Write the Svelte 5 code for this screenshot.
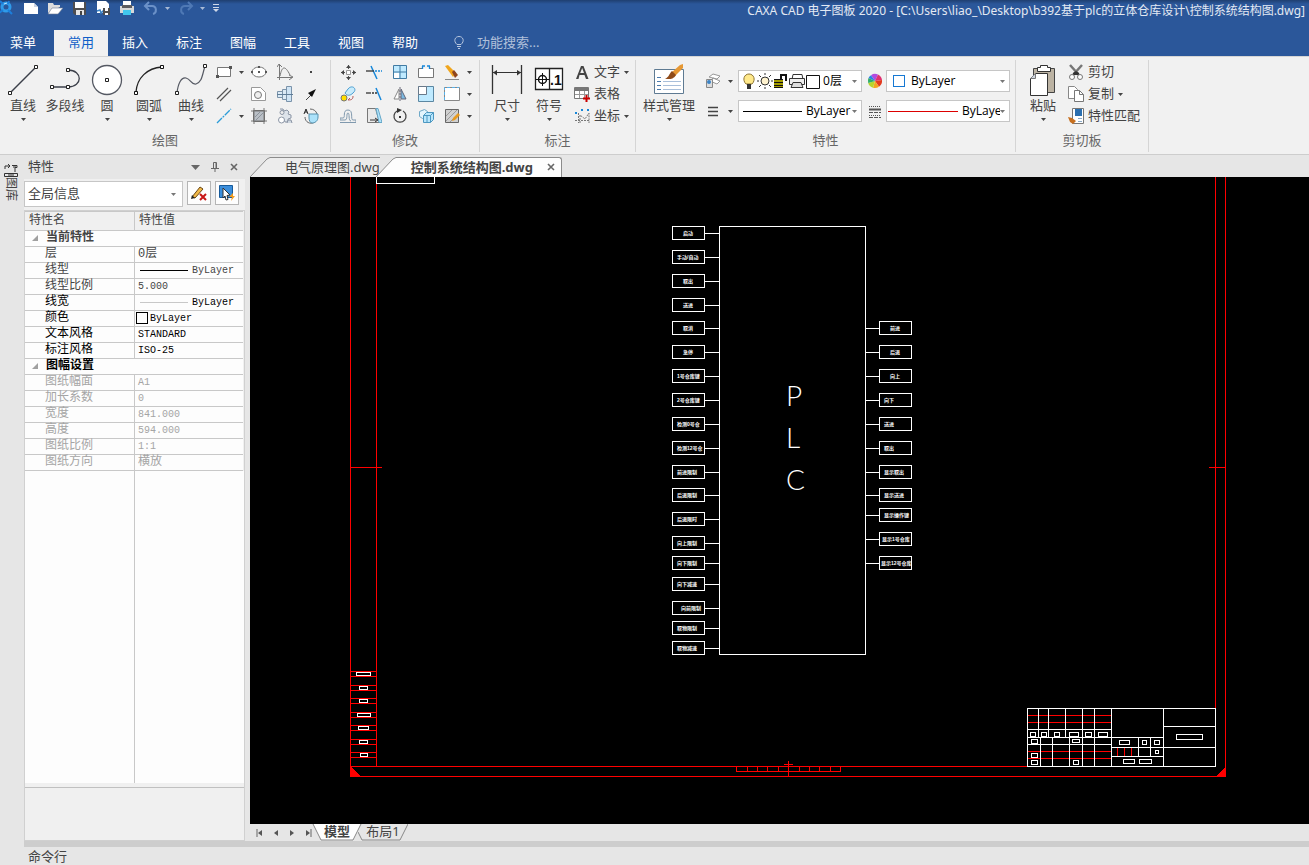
<script>
  let activeTab = $state('常用');
  let query = $state('');
  let scope = $state('全局信息');

  const tabs = ['菜单', '常用', '插入', '标注', '图幅', '工具', '视图', '帮助'];

  // Icon bodies; small ones use a 16px box, large ones 32px.
  const icons = {
    app: '<circle cx="6" cy="7" r="4" fill="none" stroke="#2f9bea" stroke-width="3"/><path d="M0 1l3 3M8 10l4 4M9 1l-1 3M-1 13l4-3" stroke="#1c7fdc" stroke-width="2"/><path d="M4 4l3-1" stroke="#b5e2ff"/>',
    new: '<path d="M1 3h10l4 4v7H1z" fill="#fff"/><path d="M11 3v4h4" fill="#ccd5e4"/>',
    open: '<path d="M1 13V3h5l1 2h6v2" fill="#ddd"/><path d="M1 14l4-6h11l-5 6z" fill="#fff" stroke="#6e7b92" stroke-width=".6"/>',
    save: '<path d="M2 2h13v13H4l-2-2z" fill="#4d4d50"/><path d="M4 2h9v6H4z" fill="#fff"/><path d="M5 10h8v5H5z" fill="#e4e4e4"/><path d="M9 11h2v4H9z" fill="#444"/>',
    saveas: '<path d="M2 1h9l3 3v9H2z" fill="#fff"/><path d="M2 11l3-1 1 3 3-3" stroke="#3b83c6" stroke-width="1.500" fill="none"/><path d="M8 8h7v7H8z" fill="#4d4d50"/><path d="M10 8h3v3h-3zM10 13h3v2h-3z" fill="#fff"/>',
    print: '<path d="M4 1h8v4H4z" fill="#fff"/><path d="M1 6h14v7H1z" fill="#d8d8d8"/><path d="M3 5h10v3H3z" fill="#5c5c60"/><path d="M4 10h8v5H4z" fill="#41c7ee"/>',
    undo: '<path d="M6 2L2 6l4 4M2 6h7c5 0 5 7 1 8" fill="none" stroke="#6b91c8" stroke-width="2"/>',
    redo: '<path d="M10 2l4 4-4 4M14 6H7c-5 0-5 7-1 8" fill="none" stroke="#4f79b5" stroke-width="2"/>',
    line: '<path d="M3 29L29 3" stroke="#3b3f49" stroke-width="1.500"/><path d="M1.500 27.500h3v3h-3zM27.500 1.500h3v3h-3z" fill="#fff" stroke="#222"/>',
    polyline: '<path d="M3 23h16c15 0 15-17 0-17" fill="none" stroke="#3b3f49" stroke-width="1.300"/><path d="M1.500 21.500h3v3h-3zM17.500 21.500h3v3h-3zM17.500 4.500h3v3h-3z" fill="#fff" stroke="#222"/>',
    circle: '<circle cx="16" cy="16" r="14.500" fill="#fff" stroke="#555963" stroke-width="1.300"/><path d="M14.500 14.500h3v3h-3z" fill="#fff" stroke="#222"/>',
    arc: '<path d="M3 28C4 14 14 4 29 3" fill="none" stroke="#222" stroke-width="1.300"/><path d="M1.500 27.500h3v3h-3zM27.500 1.500h3v3h-3z" fill="#fff" stroke="#111"/>',
    spline: '<path d="M2 29C3 20 6 13 11 14c5 1 5 7 10 6 6-2 6-8 9-18" fill="none" stroke="#555963" stroke-width="1.200"/><path d="M.5 27.500h3v3h-3zM28.500 .5h3v3h-3z" fill="#fff" stroke="#222"/>',
    rect: '<path d="M1.500 3.500h13v9h-13z" fill="#fff" stroke="#777"/><path d="M13 2h3v3h-3zM0 11h3v3H0z" fill="#555"/>',
    parallel: '<path d="M1 13L12 2M4 15L15 4" stroke="#555" stroke-width="1.200"/>',
    xline: '<path d="M1 15L15 1" stroke="#2b9cd8" stroke-width="1.300" stroke-dasharray="7 1 2 1"/>',
    ellipse: '<ellipse cx="8" cy="8" rx="7" ry="5" fill="#fff" stroke="#777"/><path d="M0 7h2v2H0zM14 7h2v2h-2zM7 2h2v2H7zM7 7h2v2H7z" fill="#555"/>',
    contour: '<path d="M.5 1.500h9l5 5v8H.5z" fill="#fff" stroke="#999"/><circle cx="7" cy="9" r="3.500" fill="#eee" stroke="#777"/>',
    hatch: '<path d="M2.500 2.500h11v11h-11z" fill="#b9bfc6" stroke="#666"/><path d="M0 3h16M3 0v16M0 13h16M13 0v16" stroke="#777"/><path d="M4 9l5-5M4 13l9-9" stroke="#8c939b"/>',
    curve: '<path d="M2.500 1v15M0 13.500h15M3 12C5 2 8 1 13 11" fill="none" stroke="#777"/><path d="M0 3l2-3 3 3M12 11l4 2-4 3" fill="none" stroke="#777"/>',
    shaft: '<path d="M.5 5.500h5v6h-5zM5.500 3.500h4v10h-4z" fill="#dbeaf6" stroke="#7a93aa"/><path d="M9.500 .5h5v15h-5z" fill="#cfe4f5" stroke="#7a93aa"/><path d="M0 8.500h16" stroke="#5f7d98"/>',
    gear: '<path d="M3 1h3l1 2 3-1 2 2-1 2 3 1v3l-3 1v3H8l-1-2" fill="#dde3ea" stroke="#8b95a5"/><circle cx="5" cy="4.500" r="2" fill="#eee" stroke="#8b95a5"/><circle cx="4.500" cy="12" r="3" fill="#fff" stroke="#8b95a5"/><path d="M10 15l1-3h3l1 3" fill="#cfd7e0" stroke="#8b95a5"/>',
    point: '<path d="M7 7h2v2H7z" fill="#444"/>',
    arrow: '<path d="M3 14l6-6" stroke="#444"/><path d="M13 3L5 7l4 4z" fill="#111"/>',
    block: '<path d="M1 6L3 1l2 5M2 4h2" fill="none" stroke="#222"/><path d="M7 1c8 0 9 9 5 13C7 17 2 14 2 9" fill="none" stroke="#666"/><path d="M6 6h9v3c0 4-3 6-6 6-2 0-3-3-3-5z" fill="#ace2fa" stroke="#5792af"/>',
    move: '<path d="M8.500 1v4M8.500 12v4M1 8.500h4M12 8.500h4" stroke="#555"/><path d="M8.500 1L6 4h5zM8.500 16L6 13h5zM1 8.500L4 6v5zM16 8.500L13 6v5z" fill="#444"/><path d="M6.500 6.500h4v4h-4z" fill="#fff" stroke="#999"/>',
    copy: '<path d="M5 7l3-4c4-5 10 0 5 4-3 3-6 3-8 0z" fill="#c8ebfb" stroke="#4b9fd2"/><circle cx="4" cy="12" r="3" fill="#ffdf00" stroke="#777"/><path d="M8 14c4 0 5-1 5-4M8 14l2-2" fill="none" stroke="#b75a5a"/>',
    offset: '<path d="M0 14.500h16v-2.500h-3c-3 0 1-10-5-10s-2 8-5 8H0v2h5c3 0 1-7 3-7s0 8 3 8" fill="none" stroke="#8099ae"/>',
    trim: '<path d="M5 2l6 13" stroke="#1687d9" stroke-width="1.500"/><path d="M0 7h8" stroke="#333" stroke-width="1.300"/><path d="M9 7h7" stroke="#1687d9" stroke-width="1.300" stroke-dasharray="2 1"/>',
    extend: '<path d="M10 2l5 12" stroke="#1687d9" stroke-width="1.500"/><path d="M0 7h5" stroke="#333" stroke-width="1.300"/><path d="M6 7h6" stroke="#333" stroke-width="1.300" stroke-dasharray="2 1"/>',
    stretch: '<path d="M1.500 .5h8l4 14h-12z" fill="#e9e9e9" stroke="#777"/><path d="M10 .5h2l4 14h-3z" fill="#b3e4fa" stroke="#65a7c8"/><path d="M4 12h7M9 10l3 2-3 2" fill="none" stroke="#333"/>',
    array: '<path d="M1.500 1.500h13v13h-13zM8 1v14M1 8h14" fill="#bfeaff" stroke="#417ba3"/><path d="M2 9h5v5H2z" fill="#fff"/>',
    mirror: '<path d="M7 3v10H2z" fill="#fff" stroke="#888"/><path d="M9 3v10h5z" fill="#7bb9e2" stroke="#667"/><path d="M8 1v14" stroke="#667" stroke-dasharray="2 1"/>',
    rotate: '<path d="M11 3a6 6 0 1 1-6 0" fill="none" stroke="#444" stroke-width="1.300"/><path d="M5 0l5 2-5 3z" fill="#333"/><path d="M7 8h2v2H7z" fill="#333"/>',
    break: '<path d="M4 4.500H.5v9h15v-9H12" fill="#fff" stroke="#777"/><path d="M4 2h3M9 2h3M4.500 2v3M11.500 2v3" stroke="#1687d9" stroke-width="1.300"/>',
    scale: '<path d="M.5 .5h15v15H.5z" fill="#bfeaff" stroke="#5b87a2"/><path d="M.5 .5h8v8h-8z" fill="#fff" stroke="#68798a"/>',
    box3d: '<path d="M1.500 3.500l5-2 3 2v5l-5 2-3-2z" fill="#e4f5fd" stroke="#6fa9c8"/><path d="M5.500 7.500l3-3h7v7l-3 3h-7z" fill="#b9e7fd" stroke="#4d98c1"/><path d="M5.500 7.500h7l3-3M12.500 7.500v7M9 7v7" stroke="#4d98c1"/>',
    erase: '<path d="M1 2l3-1 8 8-3 4z" fill="#f0a51d"/><path d="M8 8l2-2 4 5-3 3z" fill="#8f451d"/><path d="M1 15.500h14" stroke="#888"/>',
    region: '<path d="M.5 1.500h15v13H.5z" fill="#fff" stroke="#888"/><path d="M.5 14V1.500H15" fill="none" stroke="#58b0e8" stroke-dasharray="3 2"/>',
    edithatch: '<path d="M1.500 1.500h13v13h-13z" fill="#d0d0d0" stroke="#666"/><path d="M2 8l6-6M2 13L13 2M6 14l8-8" stroke="#999"/><path d="M9 10l5-5 2 2-5 5-3 1z" fill="#e89a1f"/>',
    dim: '<path d="M1.500 1v29M30.500 1v29" stroke="#333" stroke-width="1.300"/><path d="M2 8.500h28" stroke="#333"/><path d="M6 6L2 8.500l4 3zM26 6l4 2.500-4 3z" fill="#333"/>',
    symbol: '<path d="M2.500 4.500h27v21h-27z" fill="#fff" stroke="#222" stroke-width="1.300"/><path d="M16.500 5v21" stroke="#222" stroke-width="1.300"/><circle cx="9.500" cy="15.500" r="4" fill="none" stroke="#111" stroke-width="1.500"/><path d="M3 15.500h13M9.500 9v13" stroke="#111"/><text x="17" y="21" font-family="Liberation Sans" font-size="14" font-weight="700" fill="#111">.1</text>',
    text: '<path fill-rule="evenodd" d="M2 15L7 2h2.500l5 13h-2.500l-1.500-4h-5L4.500 15zM6.200 9h3.800L8.200 4z" fill="#444"/>',
    table: '<path d="M.5 1.500h14v11H.5z" fill="#fff" stroke="#777"/><path d="M1 2h13v3H1z" fill="#777"/><path d="M1 8.500h13M5.500 5v7M10.500 5v7" stroke="#999"/><path d="M12.500 9v7M9 12.500h7" stroke="#c80000" stroke-width="2"/>',
    coord: '<path d="M4.500 5v10M1 12.500h14M6 15V7l5 4 4-6v10" fill="none" stroke="#777" stroke-dasharray="2 1"/><path d="M1 5h2M7 2h2M13 2h2" stroke="#1687d9" stroke-width="2"/>',
    styles: '<path d="M1.500 5.500h29v24h-29z" fill="#fff" stroke="#5e7a92"/><path d="M4 13.500h4M4 17.500h4M4 21.500h4M4 25.500h4" stroke="#4b7bad"/><path d="M10 17.500h18M10 21.500h18M10 25.500h18" stroke="#a9bfda"/><path d="M27 1l3-1v4l-8 8-4-3z" fill="#e69834"/><path d="M19 7l4 4c-3 5-7 4-11 4 4-2 4-5 7-8z" fill="#8f4b1a"/>',
    layers: '<path d="M4 4l4-3 7 2-3 3zM5 8l3-3 7 3-3 3z" fill="#fff" stroke="#999"/><path d="M1.500 6.500h6v8h-6z" fill="#ddd" stroke="#888"/><circle cx="4" cy="9" r="2" fill="#3b83c6"/>',
    weight: '<path d="M3 4.500h10M3 8.500h10M3 12.500h10" stroke="#444" stroke-width="1.300"/>',
    linetype: '<path d="M2 3.500h12M2 12.500h12" stroke="#555" stroke-dasharray="1 1"/><path d="M2 6.500h12" stroke="#555" stroke-width="2"/><path d="M2 9.500h12M2 14.500h12" stroke="#555" stroke-dasharray="4 1"/>',
    wheel: '<path d="M8 8L4 2.200A7 7 0 0 1 11 1.600z" fill="#b14be0"/><path d="M8 8l3-6.400A7 7 0 0 1 15 7z" fill="#e0306f"/><path d="M8 8l7-1a7 7 0 0 1-3 6.700z" fill="#e33a1f"/><path d="M8 8l4 5.700A7 7 0 0 1 6 14.700z" fill="#f4a51f"/><path d="M8 8l-2 6.700A7 7 0 0 1 1.200 10z" fill="#b8d62b"/><path d="M8 8l-6.800 2A7 7 0 0 1 1.500 5z" fill="#2fae6a"/><path d="M8 8L1.500 5A7 7 0 0 1 4 2.200z" fill="#2b80e0"/>',
    bulb: '<path d="M5 11C1 7 3 1 8 1s7 6 3 10z" fill="#ffe98b" stroke="#8b7332"/><path d="M6 11h4v5H6z" fill="#333"/>',
    sun: '<circle cx="8" cy="8" r="4" fill="#fff3cf" stroke="#333"/><path d="M8 0v2M8 14v2M0 8h2M14 8h2M2 2l2 2M12 12l2 2M14 2l-2 2M4 12l-2 2" stroke="#333"/>',
    lock: '<path d="M1 6h9v9H1z" fill="#a39b00"/><path d="M1 6.500h9M1 9.500h9M1 12.500h9M1 14.500h9" stroke="#111"/><path d="M8 7V2h5v6" fill="none" stroke="#111" stroke-width="2"/>',
    printer: '<path d="M4 1.500h9l1 5H3z" fill="#fff" stroke="#333"/><path d="M.5 5.500h15v6H.5z" fill="#eee" stroke="#333"/><path d="M4 9.500h8l2 5H2z" fill="#ddd" stroke="#333"/>',
    swatch: '<path d="M1.500 2.500h13v13h-13z" fill="#fff" stroke="#111"/>',
    paste: '<path d="M6.500 4.500h21v24h-21z" fill="#bcb3a3" stroke="#444"/><path d="M10.500 3.500h3v-2h7v2h3v4h-13z" fill="#fff" stroke="#333"/><path d="M8.500 9.500h12v22h-17v-17z" fill="#fff" stroke="#333"/><path d="M3.500 14.500h5v-5" fill="#cfd5df" stroke="#777"/>',
    cut: '<path d="M2 1l9 10M14 1L5 11" stroke="#777" stroke-width="2.500"/><path d="M5 9l3-2 3 2v2H5z" fill="#333"/><circle cx="4" cy="13" r="2.500" fill="#fff" stroke="#777"/><circle cx="12" cy="13" r="2.500" fill="#fff" stroke="#777"/>',
    duplicate: '<path d="M.5 .5h6l3 3v9h-9z" fill="#fff" stroke="#888"/><path d="M6.500 4.500h5l4 4v7h-9z" fill="#fff" stroke="#777"/><path d="M11.500 4.500v4h4" stroke="#777"/>',
    match: '<path d="M4.500 .5h11v15h-11z" fill="#fff" stroke="#777"/><path d="M7 1h7v7H7z" fill="#2b6fb0"/><path d="M10 10.500h4M10 13.500h4" stroke="#8aa9c8"/><path d="M0 9l4 1 4 3-3 3-3-2z" fill="#c77020"/>',
    pencil: '<path d="M1 12l8-10 3 2-8 9z" fill="#f1b847" stroke="#6a4715"/><path d="M0 14l1-4 3 3z" fill="#222"/><path d="M9 9l6 6M15 9l-6 6" stroke="#c81616" stroke-width="2"/>',
    pick: '<path d="M.5 .5h13v12H.5z" fill="#3b8edb" stroke="#175a9a"/><path d="M4 3l7 7-3 .5 1 4-2 .5-1-4-2 2z" fill="#fff" stroke="#333"/><path d="M14 8l-4 4h3l-1 4 4-5h-2z" fill="#f29b1d"/>',
  };

  const quick = [
    { icon: 'new', title: '新建' },
    { icon: 'open', title: '打开' },
    { icon: 'save', title: '保存' },
    { icon: 'saveas', title: '另存为' },
    { icon: 'print', title: '打印' },
  ];

  const drawBig = [
    { icon: 'line', label: '直线', menu: true },
    { icon: 'polyline', label: '多段线', menu: false },
    { icon: 'circle', label: '圆', menu: true },
    { icon: 'arc', label: '圆弧', menu: true },
    { icon: 'spline', label: '曲线', menu: true },
  ];
  const drawSmall = [
    [['rect', true], ['ellipse'], ['curve'], ['point']],
    [['parallel'], ['contour'], ['shaft'], ['arrow']],
    [['xline', true], ['hatch'], ['gear'], ['block']],
  ];
  const modifySmall = [
    [['move'], ['trim'], ['array'], ['break'], ['erase', true]],
    [['copy'], ['extend'], ['mirror'], ['scale'], ['region', true]],
    [['offset'], ['stretch'], ['rotate'], ['box3d'], ['edithatch', true]],
  ];
  const annotate = [
    { icon: 'text', label: '文字', menu: true },
    { icon: 'table', label: '表格', menu: false },
    { icon: 'coord', label: '坐标', menu: true },
  ];
  const clipboard = [
    { icon: 'cut', label: '剪切', menu: false },
    { icon: 'duplicate', label: '复制', menu: true },
    { icon: 'match', label: '特性匹配', menu: false },
  ];

  const sections = [
    {
      title: '当前特性',
      rows: [
        { name: '层', value: '0层', cjk: true, soft: true },
        { name: '线型', value: 'ByLayer', line: '#000', soft: true },
        { name: '线型比例', value: '5.000', soft: true },
        { name: '线宽', value: 'ByLayer', line: '#c8c8c8' },
        { name: '颜色', value: 'ByLayer', swatch: true },
        { name: '文本风格', value: 'STANDARD' },
        { name: '标注风格', value: 'ISO-25' },
      ],
    },
    {
      title: '图幅设置',
      disabled: true,
      rows: [
        { name: '图纸幅面', value: 'A1' },
        { name: '加长系数', value: '0' },
        { name: '宽度', value: '841.000' },
        { name: '高度', value: '594.000' },
        { name: '图纸比例', value: '1:1' },
        { name: '图纸方向', value: '横放', cjk: true },
      ],
    },
  ];

  // Drawing coordinates, in canvas pixels: centre line, label, start of the label.
  const inputs = [
    [56, '启动', 433], [80, '手动/自动', 427], [104, '取出', 433], [128, '送进', 433], [151, '取消', 433], [175, '急停', 433],
    [199, '1号仓库键', 427], [223, '2号仓库键', 427], [247, '检测0号仓', 427], [271, '检测12号仓', 427],
    [295, '前进限制', 427], [318, '后退限制', 427], [342, '后退限时', 427], [366, '向上限制', 427], [386, '向下限制', 427],
    [407, '向下减速', 427], [431, '向前限制', 431], [451, '取物限制', 427], [471, '取物减速', 427],
  ];
  const outputs = [
    [151, '前进', 640], [175, '后退', 640], [199, '向上', 640], [223, '向下', 634], [247, '送进', 634], [271, '取出', 634],
    [295, '显示取出', 634], [318, '显示送进', 634], [338, '显示操作键', 634], [362, '显示1号仓库', 632], [386, '显示12号仓库', 631],
  ];
  const letters = [['P', 229], ['L', 271], ['C', 313]];
  const strip = [
    [494, 106, 14], [508, 109, 8], [521, 109, 8], [535, 107, 13],
    [548, 108, 10], [562, 109, 8], [575, 110, 7],
  ];
  const cells = [
    [780, 555, 5, 4], [791, 555, 5, 4], [804, 555, 5, 4], [819, 555, 9, 4], [835, 555, 6, 4], [848, 555, 9, 4],
    [781, 562, 6, 4], [822, 562, 7, 3], [781, 576, 6, 4], [781, 583, 6, 4], [823, 583, 5, 4],
    [869, 563, 10, 4], [892, 563, 4, 4], [904, 563, 5, 4], [905, 573, 3, 3],
    [873, 582, 11, 4], [889, 582, 12, 4], [926, 557, 26, 5],
  ];
</script>

{#snippet icon(name, size = 16)}
  <svg class="icon" width={size} height={size} viewBox="0 0 {size} {size}" fill="none" aria-hidden="true">{@html icons[name]}</svg>
{/snippet}

{#snippet caret()}
  <svg class="caret" width="5" height="3" viewBox="0 0 5 3" aria-hidden="true"><path d="M0 0h5L2.500 3z" fill="currentColor" /></svg>
{/snippet}

{#snippet big(item)}
  <button class="big">
    {@render icon(item.icon, 32)}
    <span>{item.label}</span>
    {#if item.menu}{@render caret()}{/if}
  </button>
{/snippet}

{#snippet grid(rows)}
  <div class="grid">
    {#each rows as row}
      <div class="grid-row">
        {#each row as [name, menu], i}
          <button class="small" class:wide={menu || (i === 0 && rows[0][0][1])} aria-label={name}>
            {@render icon(name)}
            {#if menu}{@render caret()}{/if}
          </button>
        {/each}
      </div>
    {/each}
  </div>
{/snippet}

{#snippet list(items)}
  <div class="list">
    {#each items as item}
      <button class="list-item">
        {@render icon(item.icon)}
        <span>{item.label}</span>
        {#if item.menu}{@render caret()}{/if}
      </button>
    {/each}
  </div>
{/snippet}

<div class="app">
  <header>
    <div class="titlebar">
      <div class="quick">
        <span class="logo">{@render icon('app')}</span>
        {#each quick as q}
          <button aria-label={q.title}>{@render icon(q.icon)}</button>
        {/each}
        <button class="hist" aria-label="撤销">{@render icon('undo')}{@render caret()}</button>
        <button class="hist" aria-label="重做">{@render icon('redo')}{@render caret()}</button>
        <button class="more" aria-label="自定义">
          <svg width="6" height="8" viewBox="0 0 6 8"><path d="M0 .5h6M0 3.500h6" stroke="#cfd8e8" /><path d="M0 5h6L3 8z" fill="#cfd8e8" /></svg>
        </button>
      </div>
      <h1>CAXA CAD 电子图板 2020 - [C:\Users\liao_\Desktop\b392基于plc的立体仓库设计\控制系统结构图.dwg]</h1>
    </div>
    <nav>
      {#each tabs as tab}
        <button class="tab" class:active={tab === activeTab} onclick={() => (activeTab = tab)}>{tab}</button>
      {/each}
      <label class="search">
        <svg width="12" height="14" viewBox="0 0 12 14" fill="none" stroke="#b9c8e0"><path d="M4 9.500C0 6 2 1.500 6 1.500s6 4.500 2 8zM4 11.500h4M5 13.500h2" /></svg>
        <input type="text" placeholder="功能搜索..." aria-label="功能搜索" bind:value={query} />
      </label>
    </nav>
  </header>

  <div class="ribbon">
    <section class="group">
      <div class="body draw">
        {#each drawBig as item}{@render big(item)}{/each}
        {@render grid(drawSmall)}
      </div>
      <h2>绘图</h2>
    </section>
    <section class="group">
      <div class="body modify">{@render grid(modifySmall)}</div>
      <h2>修改</h2>
    </section>
    <section class="group">
      <div class="body annotate">
        {@render big({ icon: 'dim', label: '尺寸', menu: true })}
        {@render big({ icon: 'symbol', label: '符号', menu: true })}
        {@render list(annotate)}
      </div>
      <h2>标注</h2>
    </section>
    <section class="group">
      <div class="body props">
        {@render big({ icon: 'styles', label: '样式管理', menu: true })}
        <div class="fields">
          <button class="small wide" aria-label="图层">{@render icon('layers')}{@render caret()}</button>
          <div class="combo layer">
            {@render icon('bulb')}{@render icon('sun')}{@render icon('lock')}{@render icon('printer')}{@render icon('swatch')}
            <select aria-label="当前层"><option>0层</option></select>
            {@render caret()}
          </div>
          <button class="small" aria-label="颜色">{@render icon('wheel')}</button>
          <div class="combo color">
            <i class="chip"></i>
            <select aria-label="颜色值"><option>ByLayer</option></select>
            {@render caret()}
          </div>
          <button class="small wide" aria-label="线宽">{@render icon('weight')}{@render caret()}</button>
          <div class="combo">
            <i class="stroke"></i>
            <select aria-label="线宽值"><option>ByLayer</option></select>
            {@render caret()}
          </div>
          <button class="small" aria-label="线型">{@render icon('linetype')}</button>
          <div class="combo">
            <i class="stroke long"></i>
            <select aria-label="线型值"><option>ByLayer</option></select>
            {@render caret()}
          </div>
        </div>
      </div>
      <h2>特性</h2>
    </section>
    <section class="group">
      <div class="body clip">
        {@render big({ icon: 'paste', label: '粘贴', menu: true })}
        {@render list(clipboard)}
      </div>
      <h2>剪切板</h2>
    </section>
  </div>

  <main>
    <aside class="dock">
      <button>
        <svg width="14" height="14" viewBox="0 0 14 14" fill="none" stroke="#333"><path d="M1 6V3h5M4 1l2 2-2 2M8 2.500h5v2h-2V9M9 4h3M.5 10.500h13v3H.5zM4 12h6" /></svg>
        <span>图库</span>
      </button>
    </aside>

    <aside class="panel">
      <div class="panel-head">
        <h3>特性</h3>
        <button aria-label="菜单"><svg width="9" height="5" viewBox="0 0 9 5"><path d="M0 0h9L4.500 5z" fill="#666" /></svg></button>
        <button aria-label="固定"><svg width="8" height="10" viewBox="0 0 8 10" fill="none" stroke="#666"><path d="M2.500 6V.5h3V6M5 1v5M0 6.500h8M4 7v3" /></svg></button>
        <button aria-label="关闭"><svg width="8" height="8" viewBox="0 0 8 8" stroke="#666" stroke-width="1.600"><path d="M1 1l6 6M7 1L1 7" /></svg></button>
      </div>
      <div class="panel-tools">
        <div class="combo scope">
          <select aria-label="对象" bind:value={scope}><option>全局信息</option></select>
          {@render caret()}
        </div>
        <button aria-label="取消编辑">{@render icon('pencil')}</button>
        <button aria-label="拾取">{@render icon('pick')}</button>
      </div>
      <div class="sheet">
        <table>
          <thead>
            <tr><th class="name">特性名</th><th>特性值</th></tr>
          </thead>
          <tbody>
            {#each sections as section}
              <tr class="section" class:strong={section.disabled}>
                <th colspan="2">
                  <svg width="6" height="6" viewBox="0 0 6 6"><path d="M6 0v6H0z" fill="#a0a0a0" /></svg>{section.title}
                </th>
              </tr>
              {#each section.rows as row}
                <tr class:disabled={section.disabled} class:soft={row.soft}>
                  <td class="name">{row.name}</td>
                  <td class="value" class:cjk={row.cjk}>{#if row.line}<i class="sample" style="background: {row.line}"></i>{/if}{#if row.swatch}<i class="box"></i>{/if}{row.value}</td>
                </tr>
              {/each}
            {/each}
          </tbody>
        </table>
        <div class="filler"><div></div></div>
        <div class="hint"></div>
      </div>
    </aside>

    <section class="work">
      <div class="docs">
        <button class="doc">
          <svg class="slant" width="20" height="20" viewBox="0 0 20 20"><path d="M0 20L17 2l3-1.500V20z" fill="#ececec" /><path d="M0 20L17 2l3-1.500" fill="none" stroke="#8c8c8c" /></svg>
          <span>电气原理图.dwg</span>
        </button>
        <button class="doc current">
          <svg class="slant" width="20" height="20" viewBox="0 0 20 20"><path d="M0 20L17 2l3-1.500V20z" fill="#fdfdfd" /><path d="M0 20L17 2l3-1.500" fill="none" stroke="#8c8c8c" /></svg>
          <span>控制系统结构图.dwg
            <svg width="8" height="8" viewBox="0 0 8 8" stroke="#666" stroke-width="1.600"><path d="M1 1l6 6M7 1L1 7" /></svg>
          </span>
        </button>
      </div>

      <svg class="canvas" shape-rendering="crispEdges" fill="none" stroke="#fff">
        <g stroke="#f00">
          <path d="M100.500 0V599.500H975.500V0M126.500 0V589.500M100.500 589.500H777M965.500 0V531" />
          <path d="M100 589v11h11zM976 589v11h-11z" fill="#f00" stroke="none" />
          <path d="M486.500 589v5h104v-5M497.500 594v-5M507.500 594v-5M517.500 594v-5M528.500 594v-5M549.500 594v-5M559.500 594v-5M569.500 594v-5M580.500 594v-5M538.500 584v15M534 587h9" />
          <path d="M100 290.500h32M959 290.500h17" />
          {#each strip as [y]}
            <path d="M100 {y + 0.5}h27M100 {y + 5.5}h27" />
          {/each}
        </g>
        {#each strip as [y, x, w]}
          <rect x={x + 0.5} y={y + 1.5} width={w} height="3" />
        {/each}
        <path d="M126.500 0V6.500H184.500V0" />

        <rect x="469.500" y="49.500" width="146" height="428" />
        {#each inputs as [y, label, x]}
          <rect x="422.500" y={y - 6.5} width="32" height="13" />
          <path d="M455 {y + 0.5}h14" />
          <text class="pin" {x} y={y + 2}>{label}</text>
        {/each}
        {#each outputs as [y, label, x]}
          <rect x="629.500" y={y - 6.5} width="32" height="13" />
          <path d="M616 {y + 0.5}h13" />
          <text class="pin" {x} y={y + 2}>{label}</text>
        {/each}
        {#each letters as [ch, y]}
          <text class="plc" x="536" {y}>{ch}</text>
        {/each}

        <path stroke="#f00" d="M777 538.500h84M777 545.500h84M777 574.500h84M777 581.500h84M867.500 570v9M874.500 570v9M881.500 570v9" />
        <path d="M777.500 531.500h188v58h-188zM777 552.500h84M777 560.500h136M777 567.500h84M788.500 531v29M798.500 531v29M815.500 531v29M832.500 531v58M844.500 531v58M861.500 531v58M790.500 560v29M802.500 560v29M819.500 560v29M913.500 531v58M861 570.500h52M861 579.500h52M888.500 560v19M900.500 560v19M913 549.500h52M913 570.500h52" />
        {#each cells as [x, y, w, h]}
          <rect x={x + 0.5} y={y + 0.5} width={w} height={h} />
        {/each}
      </svg>

      <div class="layouts">
        <button class="step" aria-label="第一个"><svg width="8" height="8" viewBox="0 0 8 8"><path d="M1 0v8" stroke="#666" /><path d="M6 1v6L2 4z" fill="#555" /></svg></button>
        <button class="step" aria-label="上一个"><svg width="8" height="8" viewBox="0 0 8 8"><path d="M6 1v6L2 4z" fill="#555" /></svg></button>
        <button class="step" aria-label="下一个"><svg width="8" height="8" viewBox="0 0 8 8"><path d="M2 1v6l4-3z" fill="#555" /></svg></button>
        <button class="step" aria-label="最后一个"><svg width="8" height="8" viewBox="0 0 8 8"><path d="M7 0v8" stroke="#666" /><path d="M2 1v6l4-3z" fill="#555" /></svg></button>
        <button class="layout current">
          <svg width="50" height="17" viewBox="0 0 50 17"><path d="M1 0l8 16h32l8-16" fill="#fff" stroke="#888" /></svg>
          <span>模型</span>
        </button>
        <button class="layout">
          <svg width="50" height="17" viewBox="0 0 50 17"><path d="M0 8l4 8h38l8-16" fill="none" stroke="#888" /></svg>
          <span>布局1</span>
        </button>
      </div>
    </section>
  </main>

  <footer>命令行</footer>
</div>

<style>
  :global(body) {
    margin: 0;
  }
  .app {
    display: flex;
    flex-direction: column;
    height: 100vh;
    overflow: hidden;
    background: #e6e6e6;
    color: #444;
    font-family: 'Noto Sans', 'Noto Sans CJK SC', sans-serif;
    font-size: 13px;
    line-height: 16px;
  }
  button, select, input {
    margin: 0;
    padding: 0;
    border: none;
    border-radius: 0;
    background: transparent;
    color: inherit;
    font: inherit;
  }
  h1, h2, h3 {
    margin: 0;
    font-size: 13px;
    font-weight: 400;
  }
  svg {
    display: block;
    flex: none;
  }

  header {
    flex: none;
    background: #2b579a;
    color: #fff;
  }
  .titlebar {
    display: flex;
    justify-content: space-between;
    height: 30px;
    padding-right: 4px;
    background: linear-gradient(#1f3f70, #2b579a 4px);
  }
  .titlebar h1 {
    padding-top: 3px;
    color: #e3e9f3;
    font-size: 12px;
    white-space: nowrap;
  }
  .quick {
    display: flex;
    gap: 8px;
    height: 16px;
  }
  .logo {
    width: 15px;
  }
  .hist {
    display: flex;
    align-items: center;
    gap: 6px;
    color: #a8bad6;
  }
  .more {
    display: flex;
    align-items: center;
  }
  nav {
    display: flex;
    height: 26px;
  }
  .tab {
    width: 54px;
    padding-bottom: 2px;
    font-size: 13px;
  }
  .tab:first-child {
    padding-right: 8px;
  }
  .tab.active {
    background: #f1f1f1;
    color: #0f5fc8;
  }
  .search {
    display: flex;
    align-items: center;
    gap: 12px;
    padding: 0 0 2px 21px;
  }
  .search input {
    width: 120px;
    outline: none;
  }
  .search input::placeholder {
    color: #b0c0da;
    opacity: 1;
  }

  .ribbon {
    display: flex;
    flex: none;
    padding: 3px 0 2px;
    border-top: 1px solid #d5d5d5;
    border-bottom: 1px solid #cdcdcd;
    background: #f1f1f1;
  }
  .group {
    border-right: 1px solid #d5d5d5;
  }
  .group h2 {
    padding: 1px 0 4px;
    color: #666;
    text-align: center;
  }
  .body {
    display: flex;
    height: 71px;
  }
  .draw {
    padding: 0 6px 0 2px;
  }
  .modify {
    padding: 0 5px 0 4px;
  }
  .annotate {
    padding: 0 6px;
  }
  .props {
    padding: 0 5px 0 2px;
  }
  .clip {
    padding: 0 8px 0 6px;
  }
  .big {
    display: flex;
    flex-direction: column;
    align-items: center;
    min-width: 42px;
    padding-top: 4px;
    white-space: nowrap;
  }
  .props .big {
    width: 62px;
  }
  .big span {
    padding: 1px 0 5px;
  }
  .caret {
    color: #444;
  }
  .hist .caret {
    color: inherit;
  }
  .grid, .list {
    display: flex;
    flex-direction: column;
    padding-top: 1px;
  }
  .grid-row {
    display: flex;
  }
  .small {
    display: flex;
    align-items: center;
    justify-content: center;
    width: 26px;
    height: 22px;
  }
  .small.wide {
    justify-content: flex-start;
    gap: 7px;
    width: 35px;
    padding-left: 5px;
  }
  .draw .small.wide {
    padding-left: 4px;
    width: 34px;
  }
  .list-item {
    display: flex;
    align-items: center;
    gap: 4px;
    height: 22px;
    padding-left: 4px;
    white-space: nowrap;
  }
  .list-item span {
    padding-bottom: 2px;
  }
  .fields {
    display: grid;
    grid-template-columns: 38px 124px 24px 124px;
    align-content: start;
    row-gap: 8px;
    padding-top: 10px;
  }
  .combo {
    display: flex;
    align-items: center;
    height: 20px;
    padding-right: 4px;
    border: 1px solid #c6c6c6;
    background: #fff;
    color: #000;
    font-family: 'Open Sans', 'Noto Sans CJK SC', sans-serif;
    font-size: 12px;
  }
  .combo select {
    flex: 1;
    min-width: 0;
    height: 18px;
    appearance: none;
    outline: none;
  }
  .combo .caret {
    color: #777;
  }
  .layer {
    padding-left: 2px;
  }
  .layer select {
    padding-left: 2px;
  }
  .chip {
    width: 10px;
    height: 10px;
    margin: 0 6px;
    border: 1px solid #1678d3;
  }
  .stroke {
    width: 59px;
    height: 1px;
    margin: 0 4px;
    background: #000;
  }
  .stroke.long {
    width: 70px;
    margin-left: 1px;
    background: #d00;
  }

  main {
    display: flex;
    flex: 1;
    min-height: 0;
  }
  .dock {
    width: 24px;
    padding-top: 8px;
  }
  .dock button {
    display: flex;
    flex-direction: column;
    align-items: center;
    width: 22px;
  }
  .dock span {
    font-size: 12px;
    line-height: 14px;
    writing-mode: vertical-rl;
    text-orientation: sideways;
  }
  .panel {
    display: flex;
    flex-direction: column;
    width: 221px;
    background: #f0f0f0;
  }
  .panel-head {
    display: flex;
    align-items: center;
    gap: 11px;
    height: 24px;
    padding: 0 7px 0 4px;
    background: #e6e6e6;
  }
  .panel-head h3 {
    flex: 1;
    padding-bottom: 2px;
  }
  .panel-tools {
    display: flex;
    gap: 4px;
    padding: 2px 6px 3px 0;
  }
  .panel-tools button {
    display: grid;
    place-items: center;
    width: 24px;
    height: 24px;
    border: 1px solid #b5b5b5;
    background: #fdfdfd;
  }
  .scope {
    flex: 1;
    height: 24px;
    padding: 0 6px 0 3px;
    color: #444;
    font-size: 13px;
  }
  .scope select {
    padding-bottom: 2px;
  }
  .sheet {
    display: flex;
    flex: 1;
    flex-direction: column;
    border: 1px solid #d0d0d0;
    background: #f0f0f0;
  }
  table {
    width: 218px;
    border-collapse: collapse;
    table-layout: fixed;
    background: #fdfdfd;
    color: #000;
    font-family: 'Liberation Mono', 'Noto Sans CJK SC', monospace;
    font-size: 12px;
    line-height: 15px;
  }
  thead th {
    height: 18px;
    padding: 0 0 0 4px;
    border: 1px solid #c8c8c8;
    border-right: none;
    background: #f0f0f0;
    color: #444;
    font-weight: 400;
    text-align: left;
  }
  th.name {
    width: 105px;
    border-left: none;
  }
  tbody td, tbody th {
    height: 15px;
    padding: 0;
    border-bottom: 1px solid #c8c8c8;
    text-align: left;
  }
  .section th {
    color: #444;
  }
  .section.strong th {
    color: #000;
  }
  .section svg {
    display: inline-block;
    margin: 0 8px 0 7px;
  }
  td.name {
    padding-left: 20px;
    border-right: 1px solid #c8c8c8;
  }
  td.value {
    padding-left: 3px;
    font-size: 10px;
    white-space: nowrap;
  }
  td.value.cjk {
    font-size: 12px;
  }
  .soft {
    color: #444;
  }
  .disabled {
    color: #a5a5a5;
  }
  .sample {
    display: inline-block;
    width: 48px;
    height: 1px;
    margin: 0 4px 0 2px;
    vertical-align: middle;
  }
  .box {
    display: inline-block;
    width: 10px;
    height: 10px;
    margin: 0 2px 0 -2px;
    border: 1px solid #000;
    vertical-align: middle;
  }
  .filler {
    flex: 1;
    background: #fdfdfd;
  }
  .filler div {
    width: 109px;
    height: 100%;
    border-right: 1px solid #c8c8c8;
  }
  .hint {
    height: 52px;
    margin-top: 4px;
    border-top: 1px solid #c0c0c0;
  }

  .work {
    display: flex;
    flex: 1;
    flex-direction: column;
    min-width: 0;
    margin-left: 5px;
  }
  .docs {
    display: flex;
    height: 20px;
    padding-top: 2px;
  }
  .doc {
    display: flex;
    white-space: nowrap;
  }
  .doc > span {
    display: flex;
    align-items: center;
    gap: 14px;
    box-sizing: border-box;
    height: 20px;
    padding: 0 0 2px 15px;
    border-top: 1px solid #8c8c8c;
    background: #ececec;
    font-size: 13px;
  }
  .doc.current {
    margin-left: -4px;
    font-weight: 700;
  }
  .doc.current > span {
    padding: 0 6px 2px 15px;
    border-right: 1px solid #8c8c8c;
    border-radius: 0 3px 0 0;
    background: #fdfdfd;
  }
  .canvas {
    flex: 1;
    width: 100%;
    min-height: 0;
    background: #000;
  }
  .pin {
    fill: #fff;
    stroke: none;
    font-family: 'Liberation Sans', 'Noto Sans CJK SC', sans-serif;
    font-size: 5px;
    font-weight: 700;
  }
  .plc {
    fill: #fff;
    stroke: none;
    font-family: Lato, sans-serif;
    font-size: 28px;
    font-weight: 300;
  }
  .layouts {
    display: flex;
    height: 17px;
    padding-left: 2px;
  }
  .step {
    display: grid;
    place-items: center;
    width: 16px;
  }
  .layout {
    display: grid;
    place-items: center;
    margin-left: -4px;
    line-height: 14px;
  }
  .layout > * {
    grid-area: 1 / 1;
  }
  .layout span {
    padding-bottom: 3px;
  }
  .layout.current {
    font-weight: 700;
  }

  footer {
    flex: none;
    box-sizing: border-box;
    height: 24px;
    margin-left: 24px;
    padding: 1px 4px;
    border-top: 6px solid #cdcdcd;
  }
</style>
